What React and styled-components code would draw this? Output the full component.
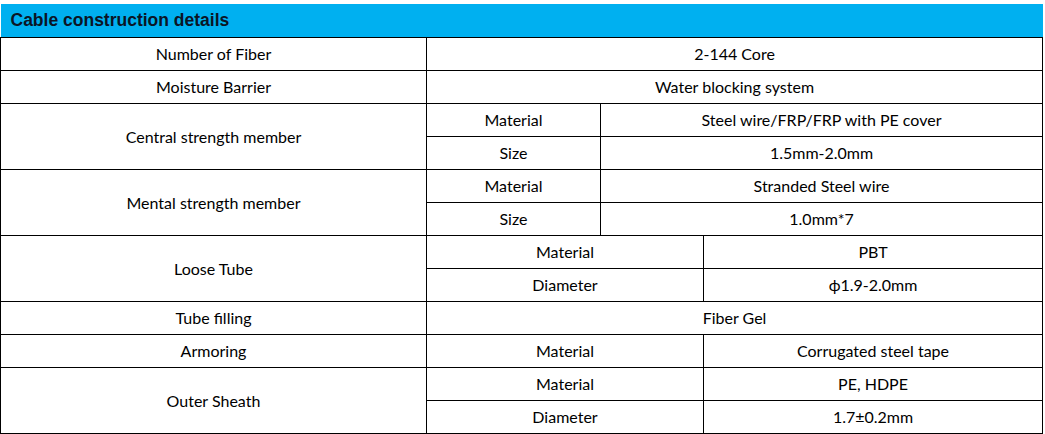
import React from "react";
import styled, { createGlobalStyle } from "styled-components";

const rows = [
  { label: "Number of Fiber", value: "2-144 Core" },
  { label: "Moisture Barrier", value: "Water blocking system" },
  {
    label: "Central strength member",
    narrow: true,
    items: [
      ["Material", "Steel wire/FRP/FRP with PE cover"],
      ["Size", "1.5mm-2.0mm"],
    ],
  },
  {
    label: "Mental strength member",
    narrow: true,
    items: [
      ["Material", "Stranded Steel wire"],
      ["Size", "1.0mm*7"],
    ],
  },
  {
    label: "Loose Tube",
    items: [
      ["Material", "PBT"],
      ["Diameter", "ϕ1.9-2.0mm"],
    ],
  },
  { label: "Tube filling", value: "Fiber Gel" },
  { label: "Armoring", items: [["Material", "Corrugated steel tape"]] },
  {
    label: "Outer Sheath",
    items: [
      ["Material", "PE, HDPE"],
      ["Diameter", "1.7±0.2mm"],
    ],
  },
];

const App = () => {
  return (
    <>
      <GlobalStyle />
      <Table>
        <colgroup>
          <col style={{ width: 426 }} />
          <col style={{ width: 174 }} />
          <col style={{ width: 103 }} />
          <col style={{ width: 339 }} />
        </colgroup>
        <tbody>
          <tr>
            <HeadCell colSpan={4}>Cable construction details</HeadCell>
          </tr>
          {rows.map((row) => {
            if (!row.items) {
              return (
                <tr key={row.label}>
                  <Cell>{row.label}</Cell>
                  <Cell colSpan={3}>{row.value}</Cell>
                </tr>
              );
            }
            return row.items.map(([name, val], i) => (
              <tr key={row.label + name}>
                {i === 0 && <Cell rowSpan={row.items.length}>{row.label}</Cell>}
                {row.narrow ? (
                  <>
                    <Cell>{name}</Cell>
                    <Cell colSpan={2}>{val}</Cell>
                  </>
                ) : (
                  <>
                    <Cell colSpan={2}>{name}</Cell>
                    <Cell>{val}</Cell>
                  </>
                )}
              </tr>
            ));
          })}
        </tbody>
      </Table>
    </>
  );
};

const GlobalStyle = createGlobalStyle`
  body {
    margin: 0;
    background: #fff;
  }
`;

const Table = styled.table`
  margin-top: 4px;
  width: 1043px;
  table-layout: fixed;
  border-collapse: collapse;
  font-family: Lato, "Open Sans", sans-serif;
  font-size: 16px;
  color: #000;
`;

const HeadCell = styled.td`
  height: 33px;
  padding: 1px 0 0 10px;
  background: #00b0f0;
  font-family: "Liberation Sans", Arial, sans-serif;
  font-weight: bold;
  font-size: 17.5px;
  color: #0b1526;
  text-align: left;
  box-sizing: border-box;
  border-bottom: 1.5px solid #000;
`;

const Cell = styled.td`
  height: 33px;
  padding: 0;
  box-sizing: border-box;
  border: 1.5px solid #000;
  text-align: center;
  vertical-align: middle;
  white-space: nowrap;
`;

export default App;
